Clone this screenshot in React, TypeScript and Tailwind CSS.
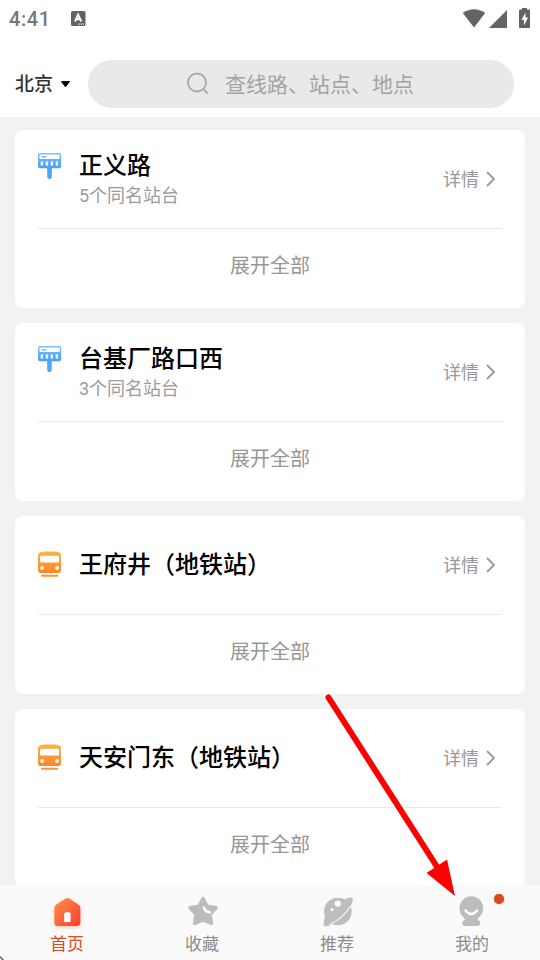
type Station = { name: string; sub?: string; kind: "bus" | "metro" };

const stations: Station[] = [
  { name: "正义路", sub: "5个同名站台", kind: "bus" },
  { name: "台基厂路口西", sub: "3个同名站台", kind: "bus" },
  { name: "王府井（地铁站）", kind: "metro" },
  { name: "天安门东（地铁站）", kind: "metro" },
];

function BusStopIcon() {
  return (
    <svg width="24" height="28" viewBox="0.3 0 24 28" className="block">
      <defs>
        <linearGradient id="busBlue" x1="0" y1="0" x2="0" y2="1">
          <stop offset="0" stopColor="#7cc0fc" />
          <stop offset="1" stopColor="#4a9ff5" />
        </linearGradient>
      </defs>
      <rect x="9.5" y="12" width="4.6" height="15" rx="2.2" fill="#4fa5f6" />
      <rect x="0.3" y="1" width="23.2" height="15.3" rx="2" fill="url(#busBlue)" />
      <rect x="1.8" y="2.4" width="20.2" height="4.6" rx="1" fill="#fff" />
      <rect x="3.6" y="4.2" width="5.4" height="1.2" rx="0.6" fill="#62aef8" />
      <g fill="#e8f4ff">
        <rect x="3" y="9.3" width="2.4" height="4.4" rx="0.8" />
        <rect x="8" y="9.3" width="2.4" height="4.4" rx="0.8" />
        <rect x="13" y="9.3" width="2.4" height="4.4" rx="0.8" />
        <rect x="18" y="9.3" width="2.4" height="4.4" rx="0.8" />
      </g>
    </svg>
  );
}

function MetroIcon() {
  return (
    <svg width="24" height="28" viewBox="0.3 0.3 24 28" className="block">
      <defs>
        <linearGradient id="metroOrange" x1="0" y1="0" x2="0" y2="1">
          <stop offset="0" stopColor="#fcb24a" />
          <stop offset="1" stopColor="#fb872a" />
        </linearGradient>
      </defs>
      <path
        d="M3.5 1.2C8 .7 16 .7 20.300 1.200Q23.300 1.800 23.300 5V19Q23.300 22.400 20 22.400H3.600Q.3 22.400.3 19V5Q.3 1.800 3.500 1.200Z"
        fill="url(#metroOrange)"
      />
      <rect x="2.4" y="5" width="19" height="6.8" rx="1.3" fill="#fff" />
      <circle cx="4.400" cy="17.200" r="2" fill="#fff6e6" />
      <circle cx="19.300" cy="17.200" r="2" fill="#fff6e6" />
      <rect x="3.200" y="24" width="17.300" height="2" rx="0.900" fill="#f4963f" />
    </svg>
  );
}

function StationCard({ station }: { station: Station }) {
  return (
    <section className="flex h-[178px] shrink-0 flex-col rounded-[8px] bg-white px-[23px]">
      <div className="flex h-[99px] items-center border-b border-[#e9e9e9]">
        <div className={station.kind === "bus" ? "-mt-[26px] w-[41px]" : "w-[41px]"}>
          {station.kind === "bus" ? <BusStopIcon /> : <MetroIcon />}
        </div>
        <div className={station.sub ? "flex flex-1 flex-col pt-[2px]" : "flex flex-1 flex-col"}>
          <h2 className="text-[24px] leading-[32px] font-medium whitespace-nowrap text-black">{station.name}</h2>
          {station.sub && <p className="-mt-px text-[18px] leading-[30px] text-[#9b9b9b]">{station.sub}</p>}
        </div>
        <div className="flex items-center gap-[6px] pr-[6px] text-[18px] leading-6 text-[#989898]">
          <span className="pt-[2px]">详情</span>
          <svg width="11" height="18" viewBox="0 0 11 18" fill="none" stroke="#999" strokeWidth="1.8">
            <path d="M2 2 9 9 2 16" />
          </svg>
        </div>
      </div>
      <button className="mt-[22px] text-[20px] leading-[30px] text-[#969696]">展开全部</button>
    </section>
  );
}

function StatusBar() {
  return (
    <div className="flex h-[37px] items-center pl-[9px] text-[#666]">
      <span className="w-[62px] font-['Roboto','Noto_Sans',sans-serif] text-[20px] font-medium tracking-[0.6px] text-[#777]">4:41</span>
      <svg width="15" height="16" viewBox="0 0 15 16">
        <rect x="0" y="0" width="14.500" height="15" rx="1.500" fill="#636363" />
        <path d="M4 10.500 7.100 3.500 10.300 10.500M5.300 8.300H9" stroke="#fff" strokeWidth="1.900" fill="none" />
        <path d="M7.500 13.200H13" stroke="#fff" strokeWidth="1.200" strokeDasharray="1.200 1" />
      </svg>
      <svg className="ml-auto" width="78" height="22" viewBox="462 7 78 22" fill="#646464">
        <path d="M462.800 12Q474 4.500 485.200 12L474 26.500Z" />
        <path d="M507 9V27H489Z" />
        <path d="M522 8.500V7h5v1.500h2q1 0 1 1V26q0 1-1 1h-9q-1 0-1-1V9.500q0-1 1-1Z" />
        <path d="M525.500 11.500 521.500 19H524V24.500L528 16.500H525.500Z" fill="#fff" />
      </svg>
    </div>
  );
}

function HomeIcon() {
  return (
    <svg width="36" height="36" viewBox="-0.4 0 36 36">
      <defs>
        <linearGradient id="homeOrange" x1="0" y1="0" x2="1" y2="1">
          <stop offset="0" stopColor="#ff9143" />
          <stop offset="1" stopColor="#f63f32" />
        </linearGradient>
        <filter id="homeGlow" x="-30%" y="-30%" width="160%" height="170%">
          <feDropShadow dx="0" dy="1.500" stdDeviation="2" floodColor="#ff6d44" floodOpacity="0.350" />
        </filter>
      </defs>
      <path
        d="M16.300 4.600Q18 3.500 19.700 4.600L29 10.600Q31 12 31 14V28.500Q31 32 27.500 32H8.500Q5 32 5 28.500V14Q5 12 7 10.600Z"
        fill="url(#homeOrange)"
        filter="url(#homeGlow)"
      />
      <path d="M14.800 28V20.300Q14.800 18 18 18T21.200 20.300V28Z" fill="#fff" />
    </svg>
  );
}

function StarIcon() {
  return (
    <svg width="36" height="36" viewBox="-0.5 0 36 36">
      <path
        d="M18.500 4.500 22.600 12.300 31.500 13.800 25.500 20.400 26.900 29.500 18.500 26 10.100 29.500 11.500 20.400 5.500 13.800 14.400 12.300Z"
        fill="#bbbcbe"
        stroke="#bbbcbe"
        strokeWidth="3.500"
        strokeLinejoin="round"
      />
      <path d="M19.500 13.800Q20.500 18 25.300 18.200" fill="none" stroke="#fff" strokeWidth="2.700" strokeLinecap="round" />
    </svg>
  );
}

function PlanetIcon() {
  return (
    <svg width="36" height="36" viewBox="-0.5 0 36 36">
      <circle cx="18.300" cy="17.500" r="13.800" fill="#bcbdbf" />
      <path
        d="M25 5.500Q31.500 2.200 33 4.400Q34 7 31.500 11L25 20 14 29Q7.500 33.800 4.500 31.500Q3.300 29.500 5.500 23Z"
        fill="#bcbdbf"
      />
      <path d="M31 12C27 19 19 26.500 10 30.500" fill="none" stroke="#f4f4f4" strokeWidth="1.300" />
      <circle cx="18.300" cy="9.600" r="3.100" fill="#fff" />
      <circle cx="12.500" cy="15.400" r="1.500" fill="#fff" />
    </svg>
  );
}

function FaceIcon() {
  return (
    <svg width="36" height="36" viewBox="0.7 0 36 36">
      <path
        d="M18 2.200A12 12 0 0 1 25 23.900L24.500 26Q27 26.500 27 29.300 27 32 24 32H12Q9 32 9 29.300 9 26.500 11.500 26L11 23.900A12 12 0 0 1 18 2.200Z"
        fill="#bbbcbe"
      />
      <path d="M12.200 16.500Q18 23.400 23.800 16.500" fill="none" stroke="#fff" strokeWidth="2.500" strokeLinecap="round" />
    </svg>
  );
}

const tabs = [
  { label: "首页", Icon: HomeIcon, active: true },
  { label: "收藏", Icon: StarIcon },
  { label: "推荐", Icon: PlanetIcon },
  { label: "我的", Icon: FaceIcon, badge: true },
];

export default function App() {
  return (
    <div className="relative flex h-[960px] w-[540px] flex-col overflow-hidden bg-[#f1f2f4] font-['Roboto','Noto_Sans_CJK_SC',sans-serif]">
      <header className="h-[117px] shrink-0 bg-white">
        <StatusBar />
        <div className="mt-[23px] flex h-12 items-center pl-[15px]">
          <span className="pt-[2px] text-[19px] leading-7 font-medium text-[#333]">北京</span>
          <svg className="ml-[8px]" width="10" height="7" viewBox="0.5 0 10 7">
            <path d="M1 .6H9L5 5.800Z" stroke="#000" strokeLinejoin="round" />
          </svg>
          <div className="ml-[17px] flex h-12 w-[426px] items-center rounded-full bg-[#e9e9e9] pl-[98px] text-[21px] text-[#a3a3a3]">
            <svg width="24" height="24" viewBox="0 0 24 24" fill="none" stroke="#aaa" strokeWidth="1.900">
              <circle cx="11" cy="10.500" r="9" />
              <path d="M17.500 17 21 21" strokeLinecap="round" />
            </svg>
            <span className="ml-[15px] pt-[3px]">查线路、站点、地点</span>
          </div>
        </div>
      </header>

      <main className="flex min-h-0 flex-1 flex-col gap-[15px] overflow-hidden px-[15px] pt-[13px]">
        {stations.map((station) => (
          <StationCard key={station.name} station={station} />
        ))}
      </main>

      <nav className="grid h-[75px] shrink-0 grid-cols-4 bg-[#fafafa]">
        {tabs.map(({ label, Icon, active, badge }) => (
          <div key={label} className="relative flex flex-col items-center pt-[9px] pr-px">
            <Icon />
            <span className={active ? "pt-px text-[17px] leading-[27px] text-[#e0492a]" : "pt-px text-[17px] leading-[27px] text-[#8c8c8c]"}>
              {label}
            </span>
            {badge && <i className="absolute top-[9px] left-[89px] size-[10px] rounded-full bg-[#dc4b1e] shadow-[0_0_1px_#dc4b1e]" />}
          </div>
        ))}
      </nav>

      <svg className="pointer-events-none absolute inset-0" width="540" height="960">
        <path d="M328.500 697.500 441 873" stroke="#fe0000" strokeWidth="6" strokeLinecap="round" />
        <path d="M455 896 426.500 873 447 859.500Z" fill="#fe0000" />
        <path d="M0 956 4 960H0Z" fill="#333" />
        <path d="M0 957.500 2.500 960H0Z" fill="#fff" />
      </svg>
    </div>
  );
}
